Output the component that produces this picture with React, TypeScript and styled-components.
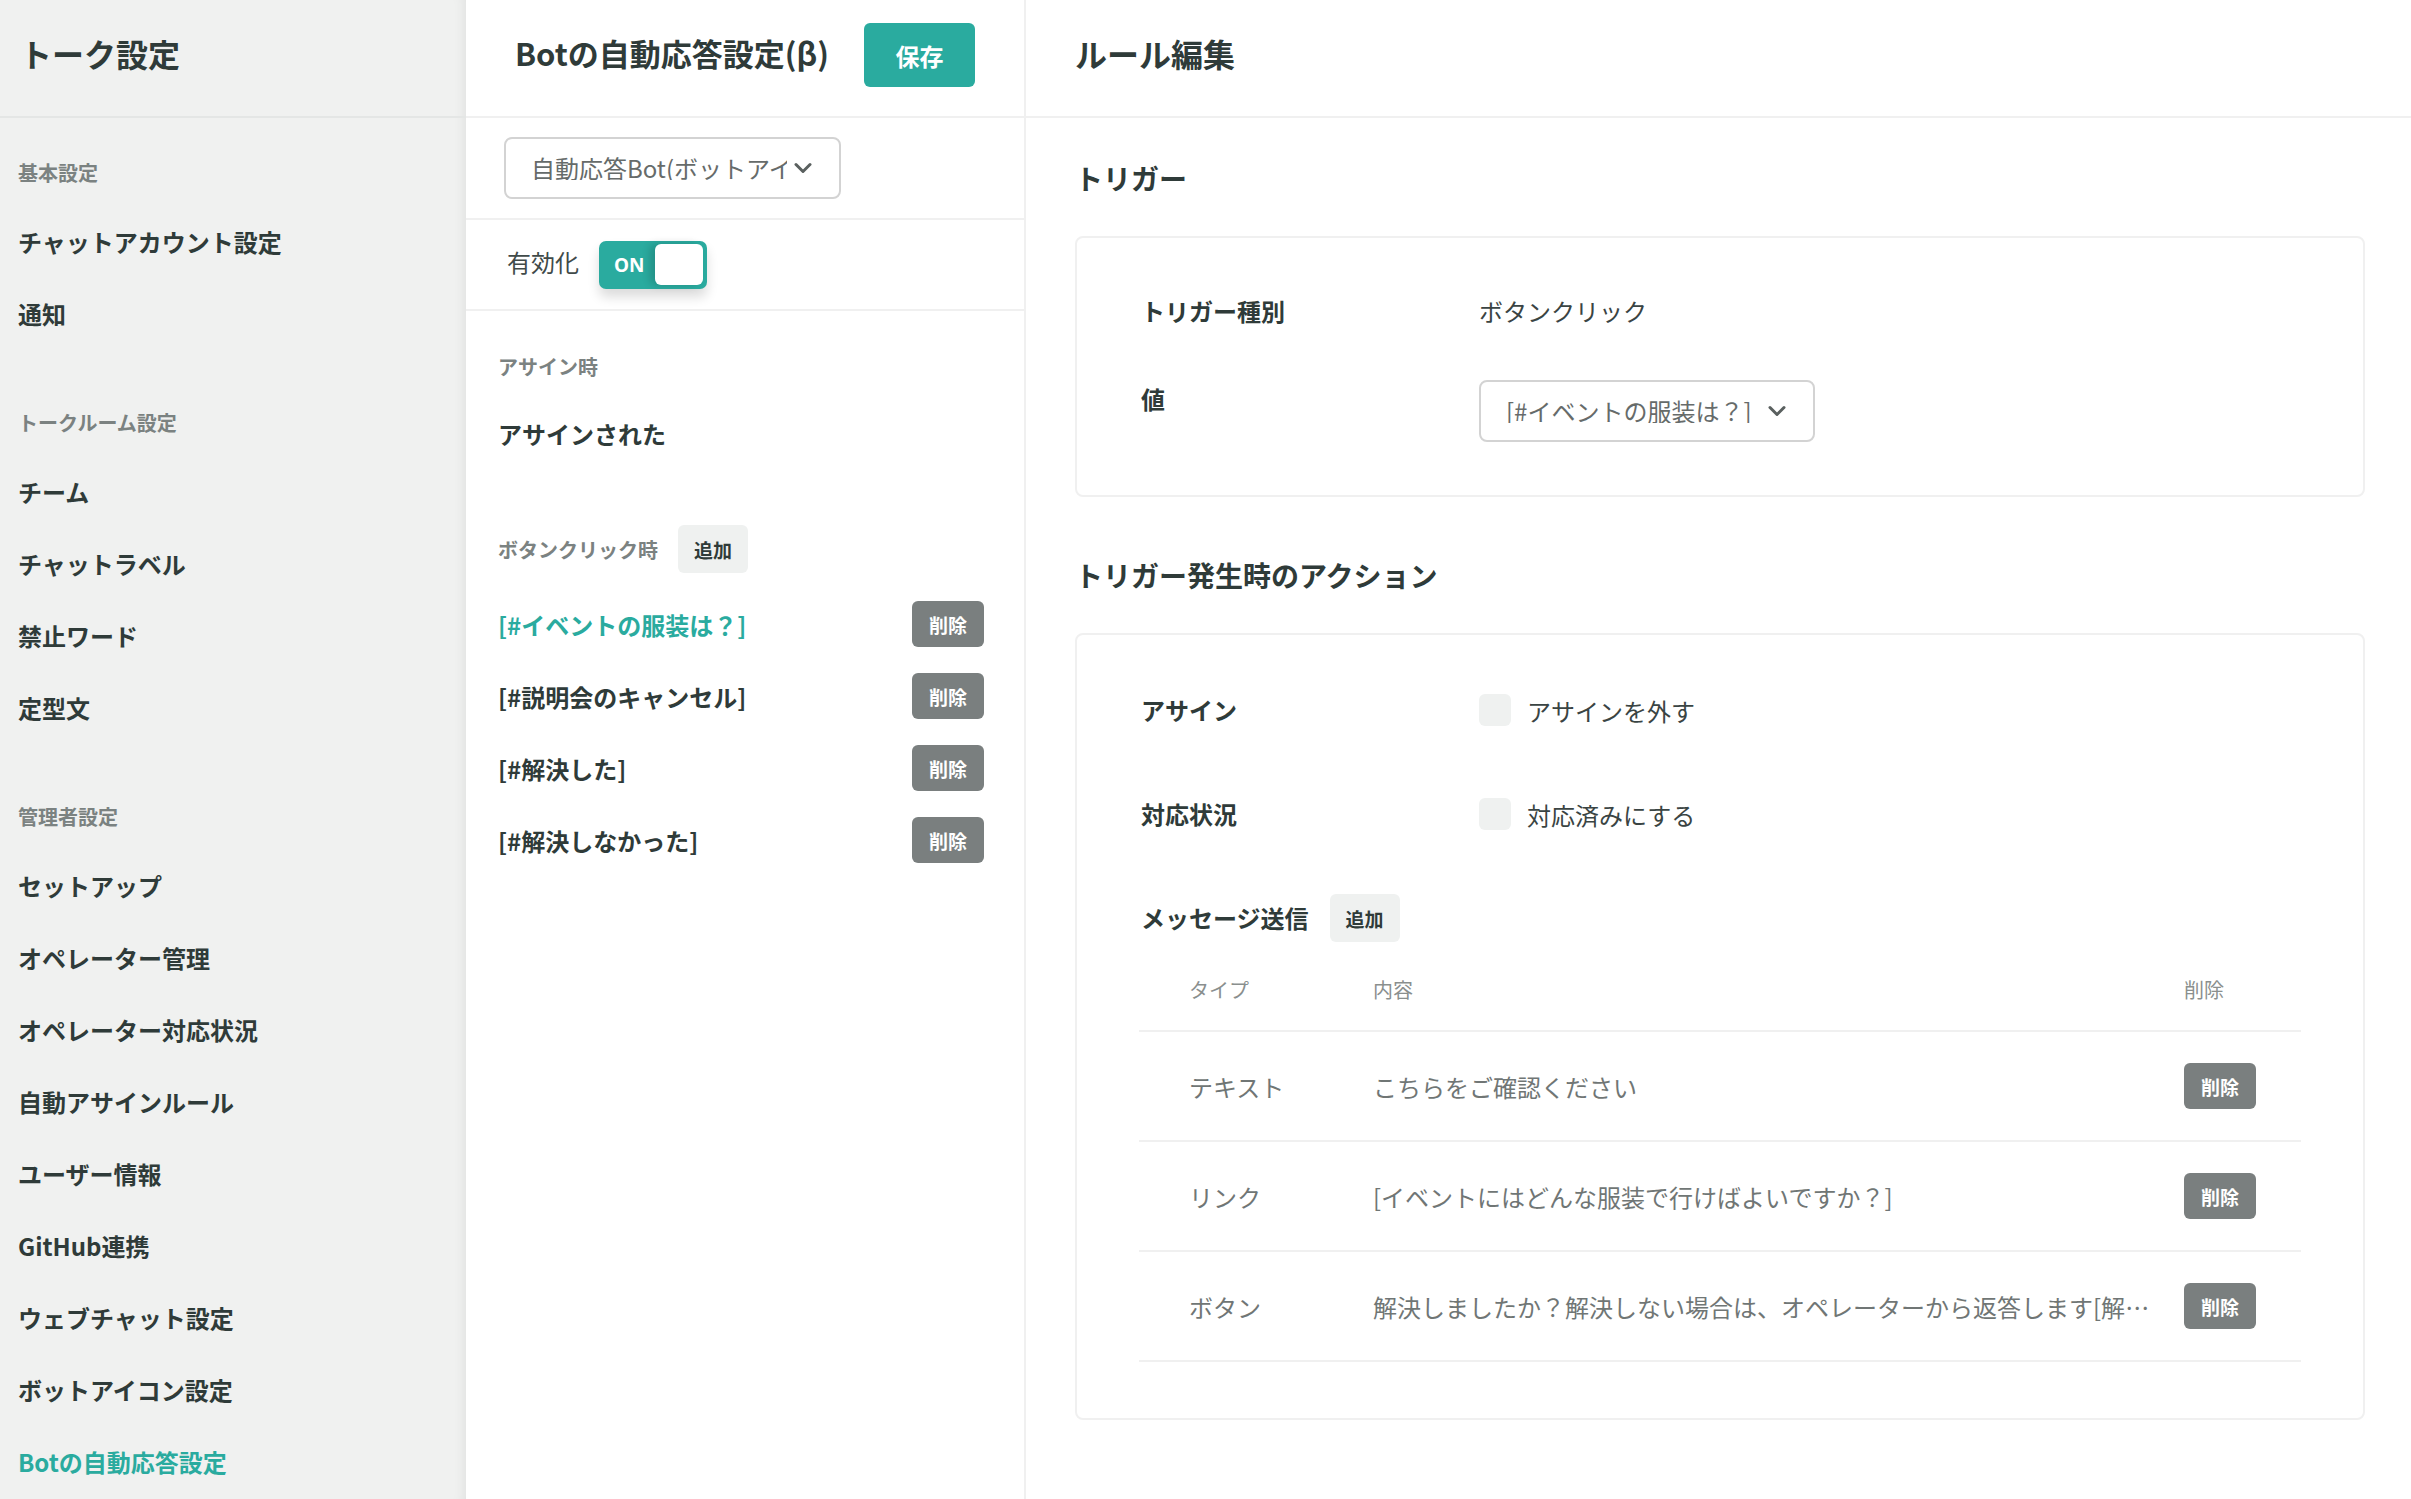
import React from "react";
import styled, { createGlobalStyle } from "styled-components";

const TEAL = "#2aab9f";
const DARK = "#2f3b39";
const MUTED = "#7b8281";
const LINE = "#f0f0f0";

const GlobalStyle = createGlobalStyle`
  html, body { margin: 0; padding: 0; }
  body {
    font-family: "Noto Sans CJK JP", "Noto Sans", sans-serif;
    color: ${DARK};
    background: #fff;
  }
  * { box-sizing: border-box; }
`;

const Page = styled.div`
  display: flex;
  width: 100%;
  height: 100vh;
  overflow: hidden;
`;

/* ---------- Sidebar ---------- */
const Sidebar = styled.aside`
  width: 466px;
  flex: none;
  background: #f0f1f0;
  box-shadow: inset -12px 0 14px -12px rgba(0, 0, 0, 0.09);
  display: flex;
  flex-direction: column;
`;

const SideHeader = styled.div`
  height: 118px;
  flex: none;
  border-bottom: 2px solid #e4e6e5;
  display: flex;
  align-items: center;
  padding: 0 0 10px 20px;
`;

const PageTitle = styled.h1<{ $size?: number }>`
  margin: 0;
  font-size: ${(p) => p.$size ?? 32}px;
  font-weight: 700;
  line-height: 1;
  color: ${DARK};
  white-space: nowrap;
`;

const Nav = styled.nav`
  padding: 21px 0 0 18px;
  display: flex;
  flex-direction: column;
`;

const NavSection = styled.div`
  display: flex;
  flex-direction: column;
  & + & {
    margin-top: 40px;
  }
`;

const SectionLabel = styled.div`
  height: 66px;
  display: flex;
  align-items: center;
  font-size: 20px;
  font-weight: 700;
  color: ${MUTED};
`;

const NavItem = styled.div<{ $active?: boolean }>`
  height: 72px;
  display: flex;
  align-items: center;
  font-size: 24px;
  font-weight: 700;
  color: ${(p) => (p.$active ? TEAL : DARK)};
`;

/* ---------- Middle panel ---------- */
const Middle = styled.section`
  width: 560px;
  flex: none;
  border-right: 2px solid ${LINE};
  display: flex;
  flex-direction: column;
`;

const PanelHeader = styled.div`
  height: 118px;
  flex: none;
  border-bottom: 2px solid ${LINE};
  display: flex;
  align-items: center;
  gap: 35px;
  padding: 0 0 6px 49px;
`;

const TitleBox = styled.div`
  padding-bottom: 5px;
`;

const SaveButton = styled.button`
  width: 111px;
  height: 64px;
  border: none;
  border-radius: 6px;
  background: ${TEAL};
  color: #fff;
  font-family: inherit;
  font-size: 24px;
  font-weight: 700;
  padding: 0;
`;

const SelectRow = styled.div`
  height: 102px;
  flex: none;
  border-bottom: 2px solid ${LINE};
  padding: 19px 0 0 38px;
`;

const SelectBox = styled.div<{ $width: number }>`
  width: ${(p) => p.$width}px;
  height: 62px;
  border: 2px solid #d3d3d3;
  border-radius: 8px;
  display: flex;
  align-items: center;
  gap: 7px;
  padding: 0 27px 0 25px;
  background: #fff;
`;

const SelectText = styled.span`
  flex: 1;
  min-width: 0;
  overflow: hidden;
  white-space: nowrap;
  font-size: 24px;
  color: #666b6a;
  line-height: 1;
`;

const ToggleRow = styled.div`
  height: 91px;
  flex: none;
  border-bottom: 2px solid ${LINE};
  display: flex;
  align-items: center;
  gap: 20px;
  padding: 0 0 0 41px;
`;

const ToggleLabel = styled.span`
  font-size: 24px;
  color: #404a49;
  margin-bottom: 7px;
`;

const Toggle = styled.div`
  width: 108px;
  height: 48px;
  border-radius: 7px;
  background: ${TEAL};
  display: flex;
  align-items: center;
  justify-content: space-between;
  padding: 3px 4px 3px 15px;
  box-shadow: 0 8px 12px rgba(0, 0, 0, 0.14);
`;

const ToggleText = styled.span`
  color: #fff;
  font-size: 19px;
  font-weight: 700;
  font-family: "Noto Sans", sans-serif;
`;

const Knob = styled.span`
  width: 48px;
  height: 41px;
  border-radius: 6px;
  background: #fff;
  box-shadow: -5px 0 8px rgba(0, 0, 0, 0.16);
`;

const MiddleBody = styled.div`
  padding: 30px 40px 0 32px;
  display: flex;
  flex-direction: column;
`;

const SubLabel = styled.div`
  height: 50px;
  display: flex;
  align-items: center;
  font-size: 20px;
  font-weight: 700;
  color: ${MUTED};
`;

const AssignedItem = styled.div`
  margin-top: 6px;
  height: 72px;
  display: flex;
  align-items: center;
  font-size: 24px;
  font-weight: 700;
`;

const ListHeader = styled.div`
  margin-top: 44px;
  height: 72px;
  display: flex;
  align-items: center;
  gap: 20px;
`;

const AddButton = styled.button`
  height: 48px;
  padding: 0 16px;
  border: none;
  border-radius: 6px;
  background: #eff1f0;
  color: ${DARK};
  font-family: inherit;
  font-size: 19px;
  font-weight: 700;
`;

const RuleList = styled.div`
  margin-top: 3px;
  display: flex;
  flex-direction: column;
`;

const RuleRow = styled.div`
  height: 72px;
  display: flex;
  align-items: center;
  justify-content: space-between;
`;

const RuleText = styled.span<{ $active?: boolean }>`
  font-size: 24px;
  font-weight: 700;
  color: ${(p) => (p.$active ? TEAL : DARK)};
`;

const DeleteButton = styled.button`
  width: 72px;
  height: 46px;
  flex: none;
  border: none;
  border-radius: 6px;
  background: #7a7f7f;
  color: #fff;
  font-family: inherit;
  font-size: 19px;
  font-weight: 700;
  padding: 0;
`;

/* ---------- Right panel ---------- */
const Right = styled.section`
  flex: 1;
  min-width: 0;
  display: flex;
  flex-direction: column;
`;

const RightBody = styled.div`
  padding: 36px 46px 0 49px;
  display: flex;
  flex-direction: column;
`;

const SectionTitle = styled.h2<{ $spaced?: boolean }>`
  margin: ${(p) => (p.$spaced ? "54px" : "0")} 0 34px;
  height: 48px;
  display: flex;
  align-items: center;
  font-size: 28px;
  font-weight: 700;
  color: ${DARK};
`;

const Card = styled.div<{ $pt: number; $pb: number }>`
  border: 2px solid ${LINE};
  border-radius: 8px;
  padding: ${(p) => p.$pt}px 62px ${(p) => p.$pb}px 64px;
  display: flex;
  flex-direction: column;
`;

const FieldGrid = styled.div`
  display: grid;
  grid-template-columns: 338px 1fr;
  row-gap: 50px;
  align-items: start;
`;

const FieldLabel = styled.div`
  font-size: 24px;
  font-weight: 700;
  line-height: 38px;
  display: flex;
  align-items: center;
  gap: 21px;
`;

const FieldValue = styled.div`
  font-size: 24px;
  line-height: 38px;
  color: #3a4443;
`;

const ActionGrid = styled.div`
  display: grid;
  grid-template-columns: 338px 1fr;
  grid-auto-rows: 48px;
  row-gap: 56px;
  align-items: center;
`;

const CheckLine = styled.label`
  display: flex;
  align-items: center;
  gap: 16px;
  font-size: 24px;
  color: #3a4443;
`;

const CheckBox = styled.span`
  width: 32px;
  height: 32px;
  border-radius: 6px;
  background: #eff1f0;
  flex: none;
`;

const Table = styled.div`
  display: flex;
  flex-direction: column;
  margin-left: -2px;
`;

const TRow = styled.div<{ $head?: boolean }>`
  display: grid;
  grid-template-columns: 234px 1fr 117px;
  align-items: center;
  height: ${(p) => (p.$head ? 90 : 110)}px;
  padding-top: ${(p) => (p.$head ? 6 : 0)}px;
  border-bottom: 2px solid ${LINE};
`;

const TCell = styled.div<{ $head?: boolean; $first?: boolean }>`
  min-width: 0;
  padding-left: ${(p) => (p.$first ? 50 : 0)}px;
  padding-right: 30px;
  overflow: hidden;
  white-space: nowrap;
  text-overflow: ellipsis;
  font-size: ${(p) => (p.$head ? 20 : 24)}px;
  color: ${(p) => (p.$head ? "#8a8f8e" : "#707675")};
`;

const TAction = styled.div`
  display: flex;
  align-items: center;
`;

const Chevron = () => (
  <svg width="18" height="12" viewBox="0 0 18 12" fill="none">
    <path d="M2 2.5 L9 9.5 L16 2.5" stroke="#5a605f" strokeWidth="3" strokeLinecap="round" strokeLinejoin="round" />
  </svg>
);

const sections = [
  { label: "基本設定", items: ["チャットアカウント設定", "通知"] },
  { label: "トークルーム設定", items: ["チーム", "チャットラベル", "禁止ワード", "定型文"] },
  {
    label: "管理者設定",
    items: [
      "セットアップ",
      "オペレーター管理",
      "オペレーター対応状況",
      "自動アサインルール",
      "ユーザー情報",
      "GitHub連携",
      "ウェブチャット設定",
      "ボットアイコン設定",
      "Botの自動応答設定",
    ],
  },
];

const rules = ["[#イベントの服装は？]", "[#説明会のキャンセル]", "[#解決した]", "[#解決しなかった]"];

const messages = [
  { type: "テキスト", content: "こちらをご確認ください" },
  { type: "リンク", content: "[イベントにはどんな服装で行けばよいですか？]" },
  {
    type: "ボタン",
    content: "解決しましたか？解決しない場合は、オペレーターから返答します[解決した][解決しなかった]",
  },
];

export default function App() {
  return (
    <>
      <GlobalStyle />
      <Page>
        <Sidebar>
          <SideHeader>
            <PageTitle>トーク設定</PageTitle>
          </SideHeader>
          <Nav>
            {sections.map((s) => (
              <NavSection key={s.label}>
                <SectionLabel>{s.label}</SectionLabel>
                {s.items.map((it) => (
                  <NavItem key={it} $active={it === "Botの自動応答設定"}>
                    {it}
                  </NavItem>
                ))}
              </NavSection>
            ))}
          </Nav>
        </Sidebar>

        <Middle>
          <PanelHeader>
            <TitleBox>
              <PageTitle $size={31}>Botの自動応答設定(β)</PageTitle>
            </TitleBox>
            <SaveButton>保存</SaveButton>
          </PanelHeader>
          <SelectRow>
            <SelectBox $width={337}>
              <SelectText>自動応答Bot(ボットアイコン)</SelectText>
              <Chevron />
            </SelectBox>
          </SelectRow>
          <ToggleRow>
            <ToggleLabel>有効化</ToggleLabel>
            <Toggle>
              <ToggleText>ON</ToggleText>
              <Knob />
            </Toggle>
          </ToggleRow>
          <MiddleBody>
            <SubLabel>アサイン時</SubLabel>
            <AssignedItem>アサインされた</AssignedItem>
            <ListHeader>
              <SubLabel>ボタンクリック時</SubLabel>
              <AddButton>追加</AddButton>
            </ListHeader>
            <RuleList>
              {rules.map((r, i) => (
                <RuleRow key={r}>
                  <RuleText $active={i === 0}>{r}</RuleText>
                  <DeleteButton>削除</DeleteButton>
                </RuleRow>
              ))}
            </RuleList>
          </MiddleBody>
        </Middle>

        <Right>
          <PanelHeader>
            <TitleBox>
              <PageTitle>ルール編集</PageTitle>
            </TitleBox>
          </PanelHeader>
          <RightBody>
            <SectionTitle>トリガー</SectionTitle>
            <Card $pt={54} $pb={53}>
              <FieldGrid>
                <FieldLabel>トリガー種別</FieldLabel>
                <FieldValue>ボタンクリック</FieldValue>
                <FieldLabel>値</FieldLabel>
                <SelectBox $width={336}>
                  <SelectText>[#イベントの服装は？]</SelectText>
                  <Chevron />
                </SelectBox>
              </FieldGrid>
            </Card>

            <SectionTitle $spaced>トリガー発生時のアクション</SectionTitle>
            <Card $pt={51} $pb={56}>
              <ActionGrid>
                <FieldLabel>アサイン</FieldLabel>
                <CheckLine>
                  <CheckBox />
                  アサインを外す
                </CheckLine>
                <FieldLabel>対応状況</FieldLabel>
                <CheckLine>
                  <CheckBox />
                  対応済みにする
                </CheckLine>
                <FieldLabel>
                  メッセージ送信
                  <AddButton>追加</AddButton>
                </FieldLabel>
              </ActionGrid>
              <Table>
                <TRow $head>
                  <TCell $head $first>タイプ</TCell>
                  <TCell $head>内容</TCell>
                  <TCell $head>削除</TCell>
                </TRow>
                {messages.map((m) => (
                  <TRow key={m.type}>
                    <TCell $first>{m.type}</TCell>
                    <TCell>{m.content}</TCell>
                    <TAction>
                      <DeleteButton>削除</DeleteButton>
                    </TAction>
                  </TRow>
                ))}
              </Table>
            </Card>
          </RightBody>
        </Right>
      </Page>
    </>
  );
}
